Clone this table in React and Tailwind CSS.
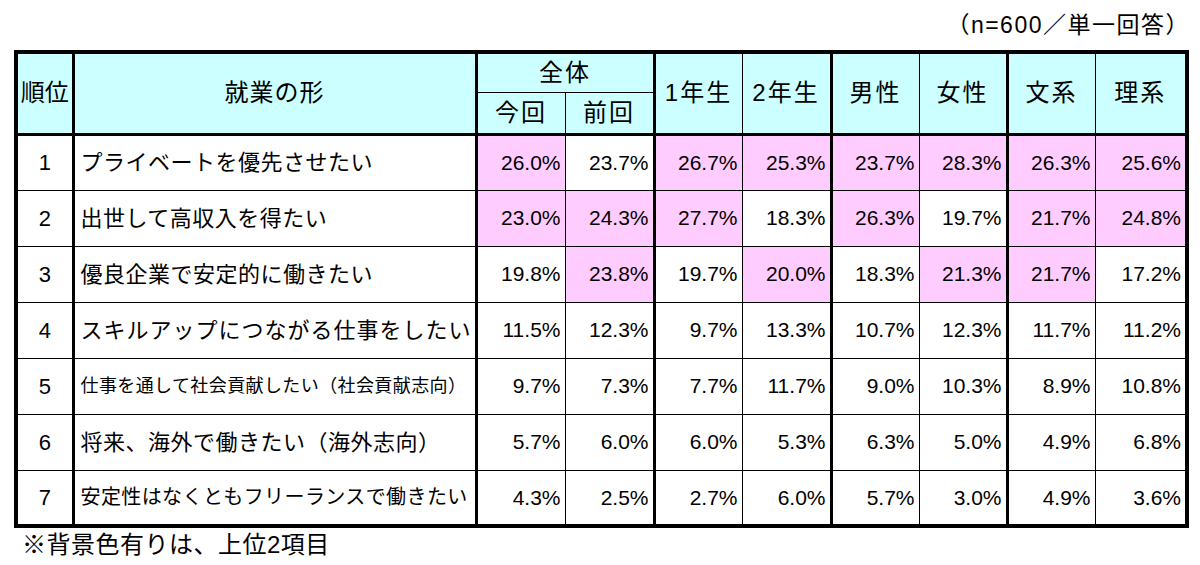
const FONT = { fontFamily: '"Liberation Sans", "Noto Sans CJK JP", sans-serif' };

const rows = [
  { rank: "1", label: "プライベートを優先させたい", cls: "text-[22px] tracking-[0.5px]",
    vals: ["26.0%", "23.7%", "26.7%", "25.3%", "23.7%", "28.3%", "26.3%", "25.6%"],
    hi: [1, 0, 1, 1, 1, 1, 1, 1] },
  { rank: "2", label: "出世して高収入を得たい", cls: "text-[22px] tracking-[0.5px]",
    vals: ["23.0%", "24.3%", "27.7%", "18.3%", "26.3%", "19.7%", "21.7%", "24.8%"],
    hi: [1, 1, 1, 0, 1, 0, 1, 1] },
  { rank: "3", label: "優良企業で安定的に働きたい", cls: "text-[22px] tracking-[0.5px]",
    vals: ["19.8%", "23.8%", "19.7%", "20.0%", "18.3%", "21.3%", "21.7%", "17.2%"],
    hi: [0, 1, 0, 1, 0, 1, 1, 0] },
  { rank: "4", label: "スキルアップにつながる仕事をしたい", cls: "text-[22px] tracking-[1px]",
    vals: ["11.5%", "12.3%", "9.7%", "13.3%", "10.7%", "12.3%", "11.7%", "11.2%"],
    hi: [0, 0, 0, 0, 0, 0, 0, 0] },
  { rank: "5", label: "仕事を通して社会貢献したい（社会貢献志向）", cls: "text-[18px] tracking-[0.4px]",
    vals: ["9.7%", "7.3%", "7.7%", "11.7%", "9.0%", "10.3%", "8.9%", "10.8%"],
    hi: [0, 0, 0, 0, 0, 0, 0, 0] },
  { rank: "6", label: "将来、海外で働きたい（海外志向）", cls: "text-[22px] tracking-[0.5px]",
    vals: ["5.7%", "6.0%", "6.0%", "5.3%", "6.3%", "5.0%", "4.9%", "6.8%"],
    hi: [0, 0, 0, 0, 0, 0, 0, 0] },
  { rank: "7", label: "安定性はなくともフリーランスで働きたい", cls: "text-[20px] tracking-[0.4px]",
    vals: ["4.3%", "2.5%", "2.7%", "6.0%", "5.7%", "3.0%", "4.9%", "3.6%"],
    hi: [0, 0, 0, 0, 0, 0, 0, 0] },
];

// left border of each value column: thick at group starts
const leftBorder = [
  "border-l-[3px]", "border-l", "border-l-[3px]", "border-l",
  "border-l-[3px]", "border-l", "border-l-[3px]", "border-l",
];

export default function App() {
  return (
    <div className="w-[1200px] h-[565px] bg-white text-black" style={FONT}>
      <div className="h-[50px] pt-[12px] pr-[10px] text-right text-[23px] leading-[26px] tracking-[1.5px]">
        （n=600／単一回答）
      </div>

      <table className="ml-[14px] w-[1171px] table-fixed border-collapse border-[4px] border-black">
        <colgroup>
          <col className="w-[57px]" />
          <col className="w-[403px]" />
          <col className="w-[89px]" />
          <col className="w-[89px]" />
          <col className="w-[88px]" />
          <col className="w-[89px]" />
          <col className="w-[88px]" />
          <col className="w-[88px]" />
          <col className="w-[88px]" />
          <col className="w-[92px]" />
        </colgroup>
        <thead>
          <tr className="h-[40px] bg-[#ccffff] text-[24px]">
            <th rowSpan={2} className="font-normal border-r-[3px] border-black text-center px-0">順位</th>
            <th rowSpan={2} className="font-normal border-r-[3px] border-black text-center tracking-[1px]">就業の形</th>
            <th colSpan={2} className="font-normal border-b border-black text-center tracking-[2px]">全体</th>
            <th rowSpan={2} className="font-normal border-l-[3px] border-black text-center tracking-[2px]">1年生</th>
            <th rowSpan={2} className="font-normal border-l border-black text-center tracking-[2px]">2年生</th>
            <th rowSpan={2} className="font-normal border-l-[3px] border-black text-center tracking-[2px]">男性</th>
            <th rowSpan={2} className="font-normal border-l border-black text-center tracking-[2px]">女性</th>
            <th rowSpan={2} className="font-normal border-l-[3px] border-black text-center tracking-[2px]">文系</th>
            <th rowSpan={2} className="font-normal border-l border-black text-center tracking-[2px]">理系</th>
          </tr>
          <tr className="h-[42px] bg-[#ccffff] text-[24px] border-b-[3px] border-black">
            <th className="font-normal text-center tracking-[2px]">今回</th>
            <th className="font-normal border-l border-black text-center tracking-[2px]">前回</th>
          </tr>
        </thead>
        <tbody>
          {rows.map((r) => (
            <tr key={r.rank} className="h-[56px] border-b border-black">
              <td className="text-center text-[22px] border-r-[3px] border-black">{r.rank}</td>
              <td className={`pl-[6px] whitespace-nowrap border-r-[3px] border-black ${r.cls}`}>{r.label}</td>
              {r.vals.map((v, i) => (
                <td
                  key={i}
                  className={`text-right pr-[4px] text-[21px] border-black ${leftBorder[i]} ${
                    r.hi[i] ? "bg-[#ffccff]" : "bg-white"
                  }`}
                >
                  {v}
                </td>
              ))}
            </tr>
          ))}
        </tbody>
      </table>

      <div className="pl-[22px] pt-[2px] text-[24px] leading-[30px] tracking-[0.5px]">
        ※背景色有りは、上位2項目
      </div>
    </div>
  );
}
